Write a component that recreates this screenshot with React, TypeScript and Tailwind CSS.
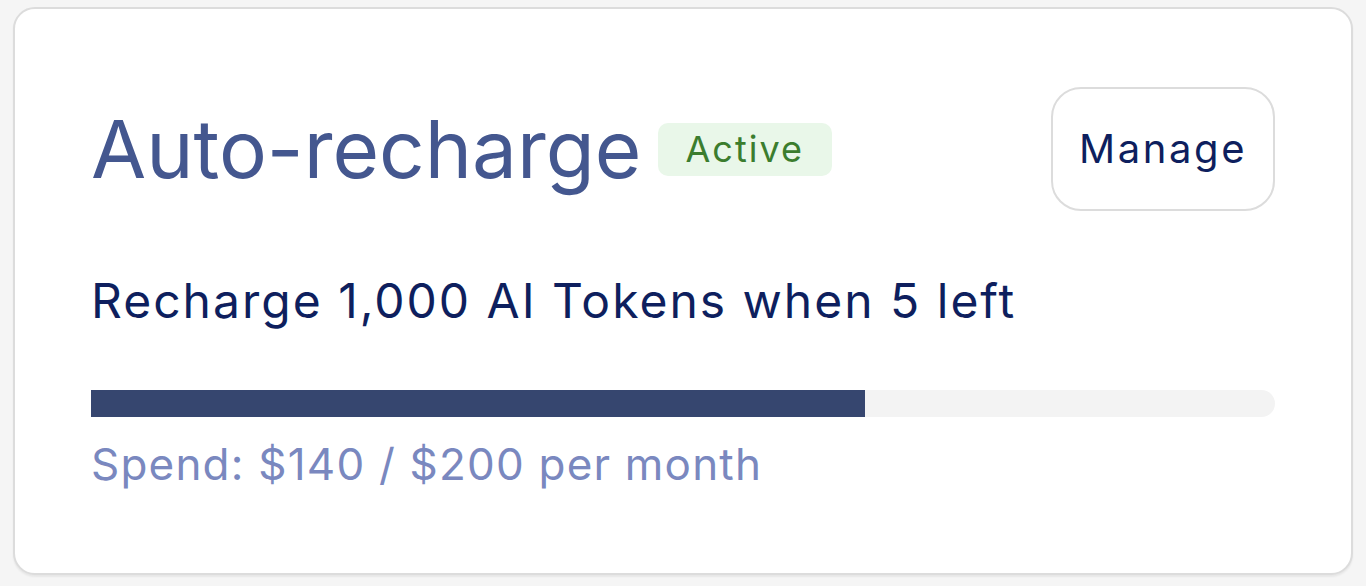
export default function App() {
  const spent = 140;
  const limit = 200;
  const pct = 65.35;

  return (
    <div className="h-[586px] w-full bg-[#f5f5f5] px-[13px] pt-[7px] font-['Inter','Noto_Sans',sans-serif]">
      <div className="h-[568px] rounded-[22px] border-2 border-[#dcdcdc] bg-white px-[76px] pt-[78px] shadow-[0_2px_2px_rgba(0,0,0,0.06)]">
        {/* header */}
        <div className="flex items-center justify-between">
          <div className="flex items-center gap-[16px]">
            <h1 className="text-[80px] leading-none font-normal text-[#44578f]">
              Auto-recharge
            </h1>
            <span className="flex h-[53px] items-center rounded-[10px] bg-[#e9f7e9] px-[28px] text-[36px] tracking-[2px] text-[#3b7d2e]">
              Active
            </span>
          </div>
          <button className="h-[124px] w-[224px] rounded-[30px] border-2 border-[#dcdcdc] bg-white text-[40px] tracking-[2.6px] text-[#0e1f5e]">
            Manage
          </button>
        </div>

        {/* rule */}
        <p className="mt-[66px] text-[48px] leading-none tracking-[2px] text-[#0e1f5e]">
          Recharge 1,000 AI Tokens when 5 left
        </p>

        {/* usage bar */}
        <div className="mt-[65px] h-[27px] w-full overflow-hidden rounded-r-full bg-[#f3f3f3]">
          <div className="h-full bg-[#36466f]" style={{ width: `${pct}%` }} />
        </div>
        <p className="mt-[25px] text-[44px] leading-none tracking-[1.2px] text-[#7a88bf]">
          Spend: ${spent} / ${limit} per month
        </p>
      </div>
    </div>
  );
}
